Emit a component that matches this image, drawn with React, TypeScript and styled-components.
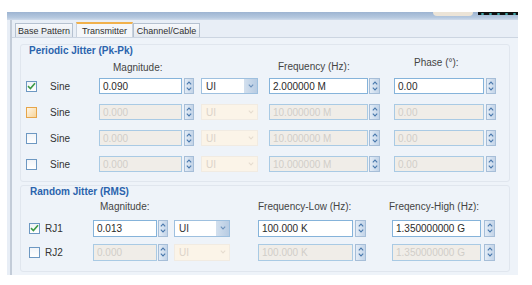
import React from 'react';
import styled, { createGlobalStyle } from 'styled-components';

const GlobalStyle = createGlobalStyle`
  html, body {
    margin: 0;
    padding: 0;
    background: #ffffff;
  }
  body {
    font-family: 'Liberation Sans', Arial, sans-serif;
    font-size: 10px;
    color: #333333;
  }
`;

const Window = styled.div`
  margin: 12px 0 0 7px;
  width: 511px;
  height: 263px;
  display: flex;
  flex-direction: column;
  overflow: hidden;
`;

const TitleStrip = styled.div`
  height: 8px;
  display: flex;
  justify-content: flex-end;
  align-items: flex-start;
  background: linear-gradient(#9db4d1, #b6c9df 70%, #cfdbea);
`;

const GripTab = styled.div`
  width: 40px;
  height: 4px;
  margin-right: 5px;
  background: #ece4d7;
  border-radius: 0 0 7px 7px;
`;

const DotStrip = styled.div`
  width: 40px;
  height: 3px;
  background: #111;
  display: flex;
  justify-content: space-around;
  align-items: center;
`;

const Dot = styled.span`
  width: 3px;
  height: 2px;
  background: #43b0b2;
  border-radius: 50%;
`;

const Body = styled.div`
  flex: 1;
  display: flex;
  padding-left: 3px;
  background: #e8eef6;
`;

const Frame = styled.div`
  flex: 1;
  display: flex;
  flex-direction: column;
  border-left: 2px solid #c3ccd8;
`;

const TabBar = styled.div`
  height: 17px;
  display: flex;
  align-items: flex-end;
  padding-left: 3px;
`;

const Tab = styled.div<{ $active?: boolean; $w: number; $ml?: number }>`
  width: ${(p) => p.$w}px;
  margin-left: ${(p) => p.$ml ?? 0}px;
  height: ${(p) => (p.$active ? 15 : 14)}px;
  box-sizing: border-box;
  display: flex;
  align-items: center;
  justify-content: center;
  font-size: 9px;
  color: #303030;
  border: 1px solid ${(p) => (p.$active ? '#c9d2dd' : '#b5c1d0')};
  border-bottom: none;
  border-top: ${(p) => (p.$active ? '2px solid #f1b14c' : '1px solid #b5c1d0')};
  background: ${(p) =>
    p.$active ? '#f5f7fa' : 'linear-gradient(#f6f8fb, #e3e8ef)'};
  padding-top: ${(p) => (p.$active ? 0 : 1)}px;
`;

const Panel = styled.div`
  flex: 1;
  display: flex;
  flex-direction: column;
  gap: 3px;
  padding: 6px 8px 0 8px;
  background: #eef3f9;
  border-top: 1px solid #ccd5e1;
`;

const Group = styled.div<{ $pb: number }>`
  border: 1px solid #e0e6ee;
  border-radius: 3px;
  padding-bottom: ${(p) => p.$pb}px;
  display: flex;
  flex-direction: column;
`;

const GroupTitle = styled.div<{ $ml: number }>`
  height: 12px;
  line-height: 12px;
  margin-left: ${(p) => p.$ml}px;
  font-weight: bold;
  font-size: 10px;
  color: #2a63ad;
`;

const HeaderRow = styled.div<{ $h: number; $pl: number }>`
  height: ${(p) => p.$h}px;
  display: flex;
  align-items: flex-start;
  padding-left: ${(p) => p.$pl}px;
`;

const HeaderLabel = styled.div<{ $w: number; $top: number }>`
  width: ${(p) => p.$w}px;
  margin-top: ${(p) => p.$top}px;
  line-height: 12px;
  color: #444444;
  white-space: nowrap;
`;

const Row = styled.div<{ $h: number }>`
  height: ${(p) => p.$h}px;
  display: flex;
  align-items: center;
`;

const Check = styled.div<{ $ml: number; $hover?: boolean }>`
  width: 11px;
  height: 11px;
  box-sizing: border-box;
  margin-left: ${(p) => p.$ml}px;
  border: 1px solid ${(p) => (p.$hover ? '#e6a54a' : '#6d98c2')};
  background: ${(p) =>
    p.$hover ? 'linear-gradient(135deg, #fff6e6, #f7d49a)' : 'linear-gradient(#f1f4f8, #ffffff)'};
  display: flex;
  align-items: center;
  justify-content: center;
`;

const RowLabel = styled.div<{ $ml: number; $w: number }>`
  margin-left: ${(p) => p.$ml}px;
  width: ${(p) => p.$w}px;
  color: #333333;
`;

const Field = styled.div<{ $ml: number; $gap: number }>`
  margin-left: ${(p) => p.$ml}px;
  display: flex;
  gap: ${(p) => p.$gap}px;
`;

const Input = styled.div<{ $w: number; $h: number; $off?: boolean }>`
  width: ${(p) => p.$w}px;
  height: ${(p) => p.$h}px;
  box-sizing: border-box;
  padding-left: 3px;
  display: flex;
  align-items: center;
  border: 1px solid ${(p) => (p.$off ? '#a9cae4' : '#85b3da')};
  background: ${(p) => (p.$off ? '#f0ede8' : '#ffffff')};
  color: ${(p) => (p.$off ? '#d0cdc8' : '#2a2a2a')};
`;

const Spinner = styled.div<{ $w: number; $h: number }>`
  width: ${(p) => p.$w}px;
  height: ${(p) => p.$h}px;
  box-sizing: border-box;
  border: 1px solid #a6bed8;
  background: linear-gradient(90deg, #e3ecf6, #c3d4e8);
  display: flex;
  flex-direction: column;
  align-items: center;
  justify-content: space-evenly;
`;

const Select = styled.div<{ $w: number; $h: number; $ml: number; $off?: boolean }>`
  width: ${(p) => p.$w}px;
  height: ${(p) => p.$h}px;
  margin-left: ${(p) => p.$ml}px;
  box-sizing: border-box;
  display: flex;
  border: 1px solid ${(p) => (p.$off ? '#f1ebe2' : '#9ec0df')};
  background: ${(p) => (p.$off ? '#fbf4e8' : '#ffffff')};
  color: ${(p) => (p.$off ? '#dcd3c8' : '#333')};
`;

const SelectText = styled.div`
  flex: 1;
  padding-left: 4px;
  display: flex;
  align-items: center;
`;

const SelectButton = styled.div<{ $off?: boolean }>`
  width: 13px;
  display: flex;
  align-items: center;
  justify-content: center;
  background: ${(p) => (p.$off ? '#fbf4e8' : 'linear-gradient(90deg, #d3e0ee, #b8cce3)')};
`;

const Chevron = ({ up, color }: { up?: boolean; color: string }) => (
  <svg width="6" height="4" viewBox="0 0 6 4">
    <path
      d={up ? 'M0.8 3.3 L3 1 L5.2 3.3' : 'M0.8 0.7 L3 3 L5.2 0.7'}
      fill="none"
      stroke={color}
      strokeWidth="1.1"
    />
  </svg>
);

const Tick = () => (
  <svg width="9" height="8" viewBox="0 0 9 8">
    <path d="M1 4.2 L3.4 6.5 L8 1.2" fill="none" stroke="#3d9a45" strokeWidth="1.6" />
  </svg>
);

type SpinProps = {
  ml: number;
  w: number;
  sw: number;
  gap: number;
  h: number;
  value: string;
  off?: boolean;
};

const SpinField = ({ ml, w, sw, gap, h, value, off }: SpinProps) => (
  <Field $ml={ml} $gap={gap}>
    <Input $w={w} $h={h} $off={off}>
      {value}
    </Input>
    <Spinner $w={sw} $h={h}>
      <Chevron up color="#4a79ad" />
      <Chevron color="#4a79ad" />
    </Spinner>
  </Field>
);

const UnitSelect = ({ ml, w, h, off }: { ml: number; w: number; h: number; off?: boolean }) => (
  <Select $ml={ml} $w={w} $h={h} $off={off}>
    <SelectText>UI</SelectText>
    <SelectButton $off={off}>
      <Chevron color={off ? '#e6ddd0' : '#6f93bd'} />
    </SelectButton>
  </Select>
);

const sineRows = [
  { on: true, mag: '0.090', freq: '2.000000 M', phase: '0.00' },
  { hover: true, mag: '0.000', freq: '10.000000 M', phase: '0.00' },
  { mag: '0.000', freq: '10.000000 M', phase: '0.00' },
  { mag: '0.000', freq: '10.000000 M', phase: '0.00' },
];

const rjRows = [
  { name: 'RJ1', on: true, mag: '0.013', low: '100.000 K', high: '1.350000000 G' },
  { name: 'RJ2', mag: '0.000', low: '100.000 K', high: '1.350000000 G' },
];

export default function App() {
  return (
    <>
      <GlobalStyle />
      <Window>
        <TitleStrip>
          <GripTab />
          <DotStrip>
            <Dot />
            <Dot />
            <Dot />
            <Dot />
            <Dot />
          </DotStrip>
        </TitleStrip>
        <Body>
          <Frame>
            <TabBar>
              <Tab $w={58}>Base Pattern</Tab>
              <Tab $w={57} $ml={3} $active>
                Transmitter
              </Tab>
              <Tab $w={67}>Channel/Cable</Tab>
            </TabBar>
            <Panel>
              <Group $pb={4}>
                <GroupTitle $ml={8}>Periodic Jitter (Pk-Pk)</GroupTitle>
                <HeaderRow $h={16} $pl={92}>
                  <HeaderLabel $w={165} $top={5}>
                    Magnitude:
                  </HeaderLabel>
                  <HeaderLabel $w={136} $top={4}>
                    Frequency (Hz):
                  </HeaderLabel>
                  <HeaderLabel $w={60} $top={0}>
                    Phase (°):
                  </HeaderLabel>
                </HeaderRow>
                {sineRows.map((r, i) => (
                  <Row key={i} $h={26}>
                    <Check $ml={5} $hover={r.hover}>
                      {r.on && <Tick />}
                    </Check>
                    <RowLabel $ml={13} $w={49}>
                      Sine
                    </RowLabel>
                    <SpinField ml={0} w={83} sw={10} gap={2} h={16} value={r.mag} off={!r.on} />
                    <UnitSelect ml={7} w={57} h={16} off={!r.on} />
                    <SpinField ml={11} w={99} sw={11} gap={1} h={16} value={r.freq} off={!r.on} />
                    <SpinField ml={14} w={90} sw={10} gap={2} h={16} value={r.phase} off={!r.on} />
                  </Row>
                ))}
              </Group>
              <Group $pb={7}>
                <GroupTitle $ml={9}>Random Jitter (RMS)</GroupTitle>
                <HeaderRow $h={18} $pl={79}>
                  <HeaderLabel $w={158} $top={3}>
                    Magnitude:
                  </HeaderLabel>
                  <HeaderLabel $w={131} $top={3}>
                    Frequency-Low (Hz):
                  </HeaderLabel>
                  <HeaderLabel $w={100} $top={3}>
                    Freqency-High (Hz):
                  </HeaderLabel>
                </HeaderRow>
                {rjRows.map((r) => (
                  <Row key={r.name} $h={24}>
                    <Check $ml={8}>{r.on && <Tick />}</Check>
                    <RowLabel $ml={5} $w={48}>
                      {r.name}
                    </RowLabel>
                    <SpinField ml={0} w={64} sw={10} gap={1} h={17} value={r.mag} off={!r.on} />
                    <UnitSelect ml={6} w={56} h={17} off={!r.on} />
                    <SpinField ml={28} w={95} sw={11} gap={2} h={17} value={r.low} off={!r.on} />
                    <SpinField ml={26} w={89} sw={11} gap={3} h={17} value={r.high} off={!r.on} />
                  </Row>
                ))}
              </Group>
            </Panel>
          </Frame>
        </Body>
      </Window>
    </>
  );
}
